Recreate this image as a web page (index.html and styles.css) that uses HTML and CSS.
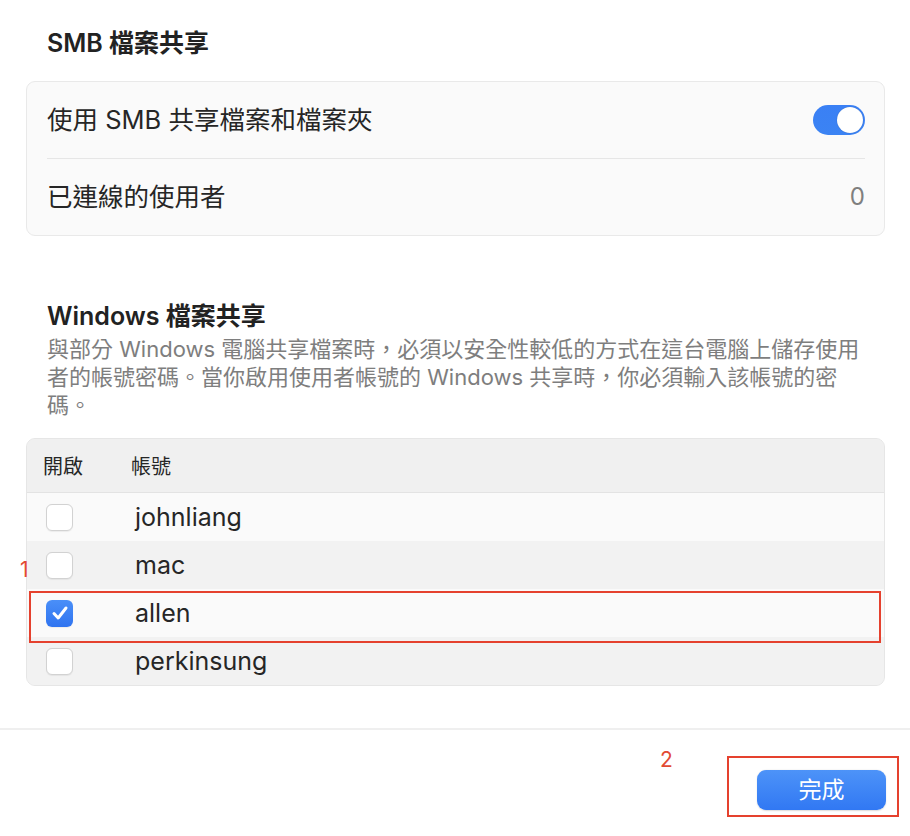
FILE: index.html
```html
<!DOCTYPE html>
<html lang="zh-Hant">
<head>
<meta charset="utf-8">
<title>SMB 檔案共享</title>
<link rel="stylesheet" href="styles.css">
</head>
<body>
<div class="page">
  <div class="content">
    <h2 class="section-title">SMB 檔案共享</h2>
    <div class="card">
      <div class="card-row">
        <span class="row-label">使用 SMB 共享檔案和檔案夾</span>
        <span class="toggle"><span class="knob"></span></span>
      </div>
      <div class="divider"></div>
      <div class="card-row">
        <span class="row-label">已連線的使用者</span>
        <span class="row-value">0</span>
      </div>
    </div>

    <h2 class="section-title win-title">Windows 檔案共享</h2>
    <p class="desc">與部分 Windows 電腦共享檔案時，必須以安全性較低的方式在這台電腦上儲存使用<br>者的帳號密碼。當你啟用使用者帳號的 Windows 共享時，你必須輸入該帳號的密<br>碼。</p>

    <div class="table">
      <div class="thead">
        <span class="th th-on">開啟</span>
        <span class="th th-acct">帳號</span>
      </div>
      <div class="tr odd">
        <span class="cb"></span>
        <span class="acct">johnliang</span>
      </div>
      <div class="tr even">
        <span class="cb"></span>
        <span class="acct">mac</span>
      </div>
      <div class="tr odd">
        <span class="cb checked">
          <svg viewBox="0 0 26 26" width="26" height="26"><path d="M7 13.5 L11.2 18 L19 8" fill="none" stroke="#fff" stroke-width="3" stroke-linecap="round" stroke-linejoin="round"/></svg>
        </span>
        <span class="acct">allen</span>
      </div>
      <div class="tr even">
        <span class="cb"></span>
        <span class="acct">perkinsung</span>
      </div>
    </div>
  </div>

  <div class="footer">
    <button class="done">完成</button>
  </div>

  <span class="mark mark-1">1</span>
  <div class="anno anno-1"></div>
  <span class="mark mark-2">2</span>
  <div class="anno anno-2"></div>
</div>
</body>
</html>
```
FILE: styles.css
```css
* { box-sizing: border-box; }
html, body { margin: 0; padding: 0; background: #ffffff; }
body {
  font-family: Inter, "Noto Sans CJK TC", sans-serif;
  color: #262626;
}
.page {
  position: relative;
  width: 910px;
  height: 836px;
  overflow: hidden;
}
.content {
  padding: 28px 25px 0 26px;
}
.section-title {
  margin: 0 0 23px 21px;
  font-size: 25px;
  line-height: 30px;
  font-weight: 600;
  color: #222222;
}
.card {
  background: #fafafa;
  border: 1px solid #e9e9e9;
  border-radius: 9px;
}
.card-row {
  height: 76px;
  display: flex;
  align-items: center;
  justify-content: space-between;
  padding: 0 19px 0 20px;
}
.row-label {
  font-size: 25.5px;
  line-height: 30px;
  color: #262626;
}
.row-value {
  font-size: 24px;
  line-height: 30px;
  color: #7f7f7f;
}
.divider {
  height: 1px;
  background: #e6e6e6;
  margin: 0 19px 0 20px;
}
.toggle {
  width: 52px;
  height: 30px;
  border-radius: 15px;
  background: linear-gradient(#3a80f5, #3b83f3);
  display: flex;
  align-items: center;
  justify-content: flex-end;
  padding: 2px;
}
.knob {
  width: 26px;
  height: 26px;
  border-radius: 50%;
  background: #ffffff;
  box-shadow: 0 0 1px rgba(0,0,0,0.3);
}
.win-title {
  margin: 65px 0 4px 21px;
}
.desc {
  margin: 0 0 19px 21px;
  font-size: 22px;
  line-height: 28px;
  color: #7e7e7e;
  white-space: nowrap;
}
.table {
  border: 1px solid #e6e6e6;
  border-radius: 9px;
  overflow: hidden;
  background: #f2f2f2;
}
.thead {
  height: 54px;
  display: flex;
  align-items: center;
  background: #f0f0f0;
  border-bottom: 1px solid #e3e3e3;
}
.th {
  font-size: 20px;
  color: #262626;
}
.th-on { padding-left: 16px; width: 104px; }
.tr {
  height: 48px;
  display: flex;
  align-items: center;
}
.tr.odd { background: #fafafa; }
.tr.even { background: #f2f2f2; }
.cb {
  width: 27px;
  height: 27px;
  margin-left: 19px;
  border-radius: 6px;
  background: #ffffff;
  border: 1px solid #d2d2d2;
  box-shadow: 0 0.5px 1px rgba(0,0,0,0.06);
  display: flex;
  align-items: center;
  justify-content: center;
  flex: none;
}
.cb.checked {
  border: none;
  background: linear-gradient(#4a8ff8, #2f74f0);
}
.cb svg { display: block; }
.acct {
  margin-left: 62px;
  font-size: 25px;
  line-height: 30px;
  color: #262626;
}
.footer {
  position: absolute;
  left: 0;
  right: 0;
  top: 728px;
  height: 108px;
  border-top: 2px solid #efefef;
  display: flex;
  justify-content: flex-end;
  padding: 40px 24px 0 0;
}
.done {
  width: 129px;
  height: 40px;
  border: none;
  border-radius: 9px;
  background: linear-gradient(#4d93f8, #3178f3);
  color: #ffffff;
  font-family: Inter, "Noto Sans CJK TC", sans-serif;
  font-size: 23px;
  line-height: 40px;
  padding: 0;
  box-shadow: 0 0.5px 1.5px rgba(0,0,0,0.15);
}
.mark {
  position: absolute;
  color: #e24a33;
  font-size: 21px;
  line-height: 24px;
  font-family: Inter, "Noto Sans", sans-serif;
}
.mark-1 { left: 20px; top: 558px; }
.mark-2 { left: 660px; top: 748px; }
.anno {
  position: absolute;
  border: 2px solid #e5412e;
}
.anno-1 { left: 29px; top: 591px; width: 852px; height: 52px; }
.anno-2 { left: 727px; top: 756px; width: 172px; height: 61px; }
```
